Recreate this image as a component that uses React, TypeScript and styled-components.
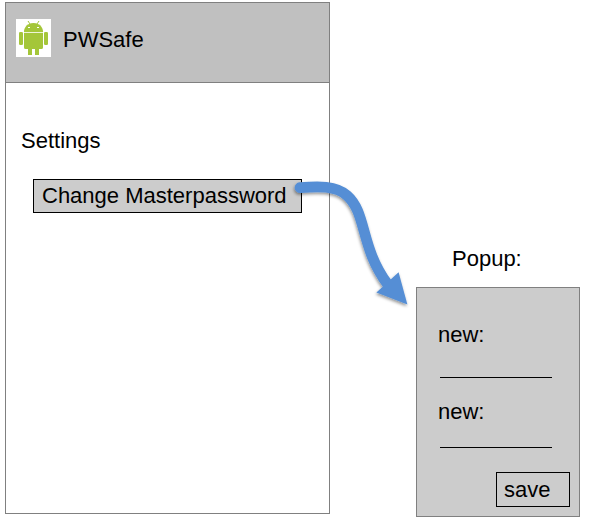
import React from "react";
import styled, { createGlobalStyle } from "styled-components";

const GlobalStyle = createGlobalStyle`
  *, *::before, *::after { box-sizing: border-box; }
  html, body { margin: 0; background: #fff; overflow: hidden; }
`;

const Canvas = styled.main`
  position: relative;
  display: flex;
  align-items: flex-start;
  gap: 86px;
  width: 593px;
  height: 531px;
  padding: 2px 0 0 5px;
  background: #fff;
  color: #000;
  font: 22px/25px "Liberation Sans", Arial, sans-serif;
`;

const Phone = styled.section`
  width: 325px;
  height: 512px;
  border: 1px solid #808080;
`;

const Header = styled.header`
  display: flex;
  align-items: flex-start;
  gap: 12px;
  height: 80px;
  padding: 16px 10px;
  border-bottom: 1px solid #808080;
  background: #c0c0c0;
`;

const AppIcon = styled.svg`
  display: block;
  flex: none;
  width: 35px;
  height: 38px;
`;

const AppName = styled.h1`
  margin: 8px 0 0;
  font: inherit;
`;

const Settings = styled.div`
  display: flex;
  flex-direction: column;
  align-items: flex-start;
  padding: 45px 0 0 15px;
`;

const SectionTitle = styled.h2`
  margin: 0;
  font: inherit;
`;

const Button = styled.button<{ $width: number; $height: number }>`
  width: ${(p) => p.$width}px;
  height: ${(p) => p.$height}px;
  padding: 0 0 0 7px;
  border: 1px solid #000;
  border-radius: 0;
  background: #ccc;
  color: inherit;
  font: inherit;
  text-align: left;
  white-space: nowrap;
`;

const MasterButton = styled(Button)`
  margin: 26px 0 0 12px;
  padding: 0 0 2px 8px;
`;

const PopupColumn = styled.section`
  width: 164px;
  padding-top: 244px;
`;

const PopupTitle = styled.h2`
  margin: 0 0 16px 36px;
  font: inherit;
`;

const Popup = styled.form`
  display: flex;
  flex-direction: column;
  height: 230px;
  padding: 34px 9px 9px 21px;
  border: 1px solid #808080;
  background: #ccc;
`;

const Field = styled.label<{ $height: number }>`
  display: flex;
  flex-direction: column;
  justify-content: space-between;
  height: ${(p) => p.$height}px;

  & + & {
    margin-top: 21px;
  }
`;

const Underline = styled.span`
  width: 112px;
  height: 1px;
  margin-left: 2px;
  background: #000;
`;

const SaveButton = styled(Button)`
  align-self: flex-end;
  margin-top: auto;
`;

const Arrow = styled.svg`
  position: absolute;
  left: 280px;
  top: 170px;
  width: 140px;
  height: 145px;
  pointer-events: none;
`;

const AndroidIcon = () => (
  <AppIcon viewBox="0 0 35 38" aria-label="Android">
    <rect width="35" height="38" fill="#fff" />
    <g fill="#a4c639">
      <path d="M12 2L14 5M23 2L21 5" stroke="#a4c639" strokeWidth="1" />
      <path d="M8 13V11.5C8.6 8.5 10.3 6.4 12.6 5.2Q17.5 2.9 22.4 5.2C24.7 6.4 26.4 8.5 27 11.5V13Z" />
      <path d="M8 14H27V28.5Q27 30 25.5 30H23V36H19V30H16V36H12V30H9.5Q8 30 8 28.5Z" />
      <rect x="3" y="13" width="4" height="13" rx="1.3" />
      <rect x="28" y="13" width="4" height="13" rx="1.3" />
    </g>
    <rect x="8" y="13" width="19" height="1" fill="#edf4d7" />
    <rect x="12" y="8" width="2" height="1" fill="#fff" />
    <rect x="21" y="8" width="2" height="1" fill="#fff" />
  </AppIcon>
);

const FlowArrow = () => (
  <Arrow viewBox="0 0 140 145" aria-hidden="true">
    <defs>
      <filter id="shadow" x="-20%" y="-20%" width="140%" height="140%">
        <feDropShadow dx="-0.6" dy="1.8" stdDeviation="1.4" floodColor="#000" floodOpacity="0.42" />
      </filter>
    </defs>
    <g filter="url(#shadow)">
      <path
        d="M20 17.7C38 16.2 56 15.5 67 25.5C87 43 80 77 107.5 114"
        fill="none"
        stroke="#558ed5"
        strokeWidth="10.7"
        strokeLinecap="round"
      />
      <path d="M118.6 102.2L127.4 134.4L96.4 122.4Z" fill="#558ed5" />
    </g>
  </Arrow>
);

export default function App() {
  return (
    <>
      <GlobalStyle />
      <Canvas>
        <Phone>
          <Header>
            <AndroidIcon />
            <AppName>PWSafe</AppName>
          </Header>
          <Settings>
            <SectionTitle>Settings</SectionTitle>
            <MasterButton type="button" $width={269} $height={34}>
              Change Masterpassword
            </MasterButton>
          </Settings>
        </Phone>
        <PopupColumn>
          <PopupTitle>Popup:</PopupTitle>
          <Popup>
            <Field $height={56}>
              new:
              <Underline />
            </Field>
            <Field $height={49}>
              new:
              <Underline />
            </Field>
            <SaveButton type="button" $width={74} $height={35}>
              save
            </SaveButton>
          </Popup>
        </PopupColumn>
        <FlowArrow />
      </Canvas>
    </>
  );
}
